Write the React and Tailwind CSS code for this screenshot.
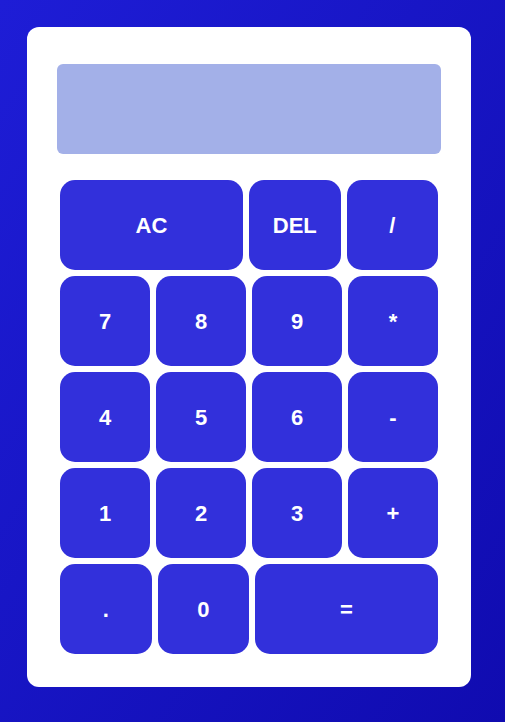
export default function App() {
  const rows = [
    [["AC", 2], ["DEL", 1], ["/", 1]],
    [["7", 1], ["8", 1], ["9", 1], ["*", 1]],
    [["4", 1], ["5", 1], ["6", 1], ["-", 1]],
    [["1", 1], ["2", 1], ["3", 1], ["+", 1]],
    [[".", 1], ["0", 1], ["=", 2]],
  ];
  return (
    <div
      className="w-[505px] h-[722px] bg-gradient-to-br from-[#1e1dd6] to-[#100bb0] pt-[27px] pl-[27px]"
      style={{ fontFamily: '"Liberation Sans", Arial, sans-serif' }}
    >
      <div className="w-[444px] h-[660px] bg-white rounded-[12px] pt-[37px] px-[30px]">
        <div className="h-[90px] bg-[#a3b0e8] rounded-[6px]"></div>
        <div className="mt-[26px] px-[3px] flex flex-col gap-[6px]">
          {rows.map((row, i) => (
            <div key={i} className="flex gap-[6px]">
              {row.map(([label, span]) => (
                <button
                  key={label}
                  className={
                    (span === 2 ? "flex-[2_2_0%] " : "flex-[1_1_0%] ") +
                    "h-[90px] bg-[#3230db] rounded-[15px] text-white font-bold text-[22px] flex items-center justify-center"
                  }
                >
                  {label}
                </button>
              ))}
            </div>
          ))}
        </div>
      </div>
    </div>
  );
}
